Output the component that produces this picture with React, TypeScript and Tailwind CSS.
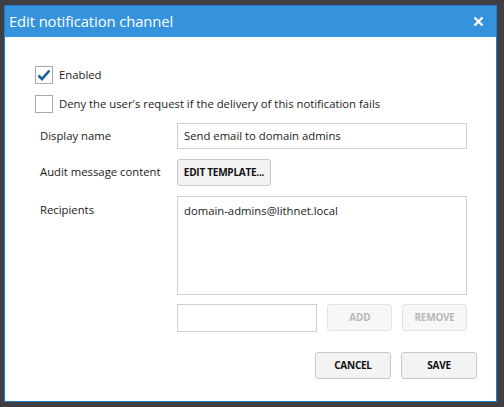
import React from 'react';

const font = { fontFamily: '"Open Sans", "Noto Sans", sans-serif' };

function CheckBox({ checked, label }: { checked: boolean; label: string }) {
  return (
    <div className="flex items-center h-[18px]">
      <div className="w-[18px] h-[18px] border border-[#a8a8a8] bg-white flex items-center justify-center">
        {checked && (
          <svg width="14" height="12" viewBox="0 0 14 12">
            <path d="M1.5 6.5 L5 10 L12.5 1.5" fill="none" stroke="#1f5f9f" strokeWidth="2.6" />
          </svg>
        )}
      </div>
      <span className="ml-[6px] text-[11.3px] text-[#1a1a1a]">{label}</span>
    </div>
  );
}

function Button({ children, disabled, className }: { children: React.ReactNode; disabled?: boolean; className?: string }) {
  return (
    <button
      className={`h-[27px] rounded-[3px] border text-[10px] font-bold tracking-tight flex items-center justify-center ${
        disabled ? 'bg-[#f7f7f7] border-[#e3e3e3] text-[#b8b8b8]' : 'bg-[#f3f3f3] border-[#c8c8c8] text-[#111]'
      } ${className ?? ''}`}>
      {children}
    </button>
  );
}

export default function App() {
  return (
    <div className="w-[504px] h-[407px] bg-[#3f3f43] pt-[5px] pl-[4px]" style={font}>
      <div className="w-[493px] h-[397px] border border-[#1f7ad2] bg-white flex flex-col">
        <div className="h-[31px] bg-[#3592dd] flex items-center justify-between pl-[4px] pr-[12px]">
          <span className="text-white text-[14.8px] tracking-[-0.1px]">Edit notification channel</span>
          <svg width="11" height="11" viewBox="0 0 11 11">
            <path d="M1.5 1.5 L9.5 9.5 M9.5 1.5 L1.5 9.5" stroke="white" strokeWidth="2.4" />
          </svg>
        </div>
        <div className="flex flex-col pl-[30px]">
          <div className="mt-[29px]">
            <CheckBox checked label="Enabled" />
          </div>
          <div className="mt-[11px]">
            <CheckBox checked={false} label="Deny the user's request if the delivery of this notification fails" />
          </div>
        </div>
        <div className="grid grid-cols-[137px_290px] pl-[35px] text-[11.3px] text-[#1a1a1a]">
          <div className="mt-[10px] h-[26px] flex items-center">Display name</div>
          <div className="mt-[10px] h-[26px] border border-[#cfcfcf] flex items-center px-[6px]">Send email to domain admins</div>

          <div className="mt-[10px] h-[27px] flex items-center">Audit message content</div>
          <div className="mt-[10px] flex">
            <Button className="w-[94px]">EDIT TEMPLATE...</Button>
          </div>

          <div className="mt-[10px] pt-[6px]">Recipients</div>
          <div className="mt-[10px] h-[99px] border border-[#cfcfcf] px-[6px] pt-[6px]">domain-admins@lithnet.local</div>

          <div />
          <div className="mt-[9px] flex gap-[10px]">
            <div className="w-[141px] h-[28px] border border-[#cfcfcf]" />
            <Button disabled className="w-[65px]">ADD</Button>
            <Button disabled className="w-[65px]">REMOVE</Button>
          </div>
        </div>
        <div className="flex justify-end gap-[10px] pr-[19px] mt-[20px]">
          <Button className="w-[76px]">CANCEL</Button>
          <Button className="w-[76px]">SAVE</Button>
        </div>
      </div>
    </div>
  );
}
